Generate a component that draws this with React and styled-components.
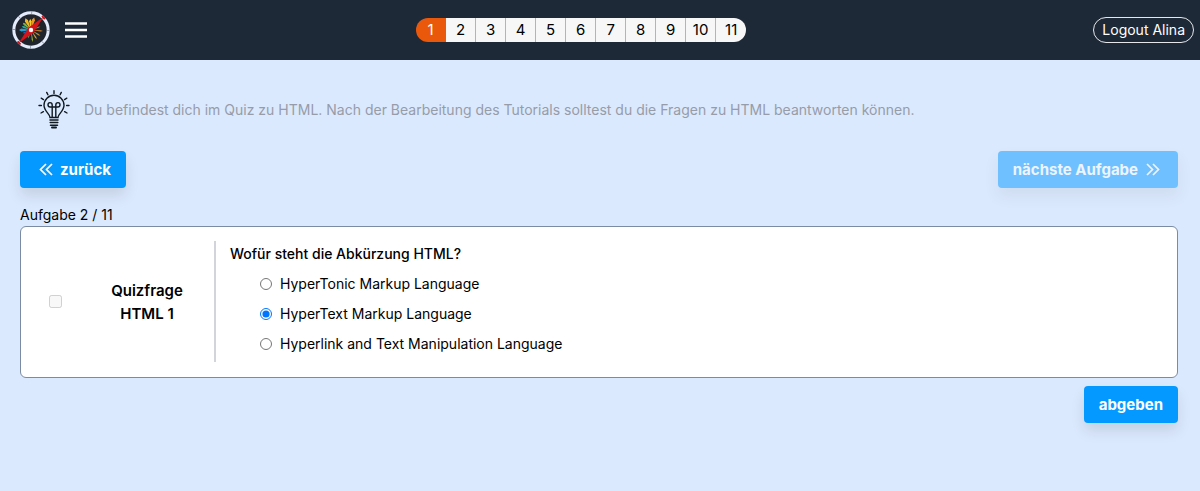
import React, { useState } from "react"
import styled, { createGlobalStyle } from "styled-components"

const tasks = [1, 2, 3, 4, 5, 6, 7, 8, 9, 10, 11]

const answers = [
  "HyperTonic Markup Language",
  "HyperText Markup Language",
  "Hyperlink and Text Manipulation Language",
]

export default function App() {
  const [answer, setAnswer] = useState(1)

  return (
    <>
      <GlobalStyle />
      <Header>
        <LogoLink href="#" aria-label="Startseite">
          <Compass />
        </LogoLink>
        <MenuButton type="button" aria-label="Menü">
          <svg width="22" height="16" viewBox="0 0 22 16">
            <path d="M0 1.5h22M0 8h22M0 14.5h22" stroke="#fff" strokeWidth="2.4" />
          </svg>
        </MenuButton>
        <Nav>
          <Pages>
            {tasks.map(task => (
              <PageButton type="button" key={task} $active={task === 1}>
                {task}
              </PageButton>
            ))}
          </Pages>
        </Nav>
        <Logout type="button">Logout Alina</Logout>
      </Header>
      <Main>
        <Hint>
          <Bulb />
          <HintText>
            Du befindest dich im Quiz zu HTML. Nach der Bearbeitung des
            Tutorials solltest du die Fragen zu HTML beantworten können.
          </HintText>
        </Hint>
        <Row>
          <Button type="button">
            <Chevrons d="M11 1 5.5 6.5 11 12M17 1 11.5 6.5 17 12" />
            zurück
          </Button>
          <Button type="button" disabled>
            nächste Aufgabe
            <Chevrons d="M5 1l5.5 5.5L5 12M11 1l5.5 5.5L11 12" />
          </Button>
        </Row>
        <Counter>Aufgabe 2 / 11</Counter>
        <Card>
          <Status>
            <Check type="checkbox" disabled aria-label="Erledigt" />
          </Status>
          <Title>Quizfrage HTML 1</Title>
          <Question>
            <Legend>Wofür steht die Abkürzung HTML?</Legend>
            <Options>
              {answers.map((text, i) => (
                <Option key={text}>
                  <Radio
                    type="radio"
                    name="answer"
                    checked={answer === i}
                    onChange={() => setAnswer(i)}
                  />
                  {text}
                </Option>
              ))}
            </Options>
          </Question>
        </Card>
        <Submit>
          <Button type="button">abgeben</Button>
        </Submit>
      </Main>
    </>
  )
}

function Chevrons({ d }) {
  return (
    <svg width="21" height="13" viewBox="0 0 21 13" fill="none" aria-hidden="true">
      <path d={d} stroke="currentColor" strokeWidth="1.7" />
    </svg>
  )
}

// angle, length, half width, color
const rays = [
  [-90, 12, 1.4, "#2b9fd0"],
  [-68, 10, 1.1, "#2fa59a"],
  [-48, 11, 1.3, "#7fb23c"],
  [-26, 13, 1.7, "#f3b81c"],
  [-4, 11, 1.3, "#f6cf2e"],
  [14, 13, 1.5, "#ee9a22"],
  [70, 10, 0.6, "#c9772c"],
  [95, 12, 0.7, "#d9822b"],
  [122, 11, 0.7, "#b98a36"],
  [148, 11, 0.7, "#d59a35"],
  [172, 12, 0.7, "#8fa23c"],
  [-160, 9, 0.6, "#4d9a57"],
  [-112, 9, 0.8, "#2a62a8"],
]

function Compass() {
  return (
    <svg width="38" height="38" viewBox="0 0 38 38" aria-hidden="true">
      <circle cx="19" cy="19" r="17.2" fill="#20242c" stroke="#e4ebfb" strokeWidth="3" />
      <circle
        cx="19"
        cy="19"
        r="17.2"
        fill="none"
        stroke="#7b8494"
        strokeWidth="3"
        strokeDasharray="0.7 12.8"
      />
      {rays.map(([angle, length, half, color]) => (
        <path
          key={angle}
          d={`M19 19 L${19 - half} ${19 - length * 0.8} L19 ${19 - length} L${19 + half} ${19 - length * 0.8}z`}
          fill={color}
          transform={`rotate(${angle} 19 19)`}
        />
      ))}
      <path d="M31.5 6 21.5 21.5 6.500 32.500 16.500 16.500z" fill="#d5131b" />
      <path d="M30 5 33 8M5.500 30.500 8.500 33.500" stroke="#d5131b" strokeWidth="1.8" />
      <circle cx="19" cy="19" r="2.2" fill="#fff" />
    </svg>
  )
}

function Bulb() {
  return (
    <svg
      width="32"
      height="40"
      viewBox="0 0 32 40"
      fill="none"
      stroke="#101820"
      strokeWidth="1.4"
      strokeLinecap="round"
      aria-hidden="true"
    >
      <path d="M12 27.5c0-3.800-6-6.200-6-12.200a10 10 0 0 1 20 0c0 6-6 8.400-6 12.200z" />
      <path d="M14.200 27V15c0-1.500-1-2.400-2.200-2.400s-2 1-2 2.200 1 2.200 2.200 2.200h7.600c1.200 0 2.200-1 2.200-2.200s-.8-2.200-2-2.200-2.200.9-2.200 2.400v12" />
      <path d="M12 30h8M12.200 32.600h7.600M12.500 35.200h7" strokeWidth="1.5" />
      <path d="M14 37.6h4" strokeWidth="2" />
      <path d="M16 .8v2.600M8.700 2.400l1.200 2.400M23.300 2.400l-1.200 2.400M3.200 8.200l2.300 1.400M28.800 8.200l-2.300 1.400M1 15.500h2.400M31 15.500h-2.400M3 23l2.400-1.300M29 23l-2.400-1.300" />
    </svg>
  )
}

const GlobalStyle = createGlobalStyle`
  * {
    box-sizing: border-box;
  }

  body {
    margin: 0;
    background: #dbe9fe;
    color: #000;
    font-family: Inter, "Liberation Sans", sans-serif;
    font-size: 14px;
    line-height: 22px;
  }

  button {
    font: inherit;
    cursor: pointer;
  }
`

const Header = styled.header`
  display: flex;
  align-items: center;
  height: 60px;
  padding: 0 6px 0 12px;
  background: #1e2938;
`

const LogoLink = styled.a`
  display: flex;
`

const MenuButton = styled.button`
  display: flex;
  margin-left: 15px;
  padding: 0;
  border: 0;
  background: none;
`

const Nav = styled.nav`
  display: flex;
  flex: 1;
  justify-content: center;
  padding-right: 18px;
`

const Pages = styled.div`
  display: flex;
  overflow: hidden;
  border-radius: 12px;
`

const PageButton = styled.button`
  width: 30px;
  height: 24px;
  padding: 0;
  border: 0;
  border-right: 1px solid ${props => (props.$active ? "#ea580c" : "#b4b4b4")};
  background: ${props => (props.$active ? "#ea580c" : "#f7f7f7")};
  color: ${props => (props.$active ? "#fff" : "#000")};
  font-size: 15px;

  &:last-child {
    border-right: 0;
  }
`

const Logout = styled.button`
  height: 26px;
  padding: 0 8px;
  border: 1px solid #e5e7eb;
  border-radius: 13px;
  background: none;
  color: #fff;
`

const Main = styled.main`
  padding: 30px 22px 30px 20px;
`

const Hint = styled.div`
  display: flex;
  align-items: center;
  gap: 14px;
  padding-left: 18px;
`

const HintText = styled.p`
  margin: 0;
  color: #969ca8;
`

const Row = styled.div`
  display: flex;
  justify-content: space-between;
  margin-top: 21px;
`

const Button = styled.button`
  display: flex;
  align-items: center;
  gap: 4px;
  height: 37px;
  padding: 0 15px;
  border: 0;
  border-radius: 4px;
  background: #0499ff;
  color: #fff;
  font-size: 15px;
  font-weight: 700;
  box-shadow: 0 8px 14px rgba(0, 0, 0, 0.1);

  &:disabled {
    opacity: 0.5;
    cursor: default;
  }
`

const Counter = styled.p`
  margin: 16px 0 0;
`

const Card = styled.section`
  display: flex;
  padding: 14px 15px 15px;
  border: 1px solid #7c8ba1;
  border-radius: 6px;
  background: #fff;
`

const Status = styled.div`
  display: flex;
  align-items: center;
  justify-content: center;
  width: 38px;
`

const Check = styled.input`
  width: 13px;
  height: 13px;
  margin: 0;
`

const Title = styled.h2`
  align-self: center;
  width: 110px;
  margin: 0 12px 0 18px;
  padding: 0 16px;
  font-size: 15px;
  font-weight: 600;
  line-height: 23px;
  text-align: center;
`

const Question = styled.fieldset`
  flex: 1;
  min-width: 0;
  margin: 0;
  padding: 0 0 3px 14px;
  border: 0;
  border-left: 2px solid #d1d5db;
`

const Legend = styled.legend`
  float: left;
  width: 100%;
  padding: 2px 0 4px;
  font-weight: 500;
`

const Options = styled.div`
  clear: both;
  padding-left: 30px;
`

const Option = styled.label`
  display: flex;
  align-items: center;
  gap: 8px;
  height: 30px;
`

const Radio = styled.input`
  width: 12px;
  height: 12px;
  margin: 0;
`

const Submit = styled.div`
  display: flex;
  justify-content: flex-end;
  margin-top: 8px;
`
